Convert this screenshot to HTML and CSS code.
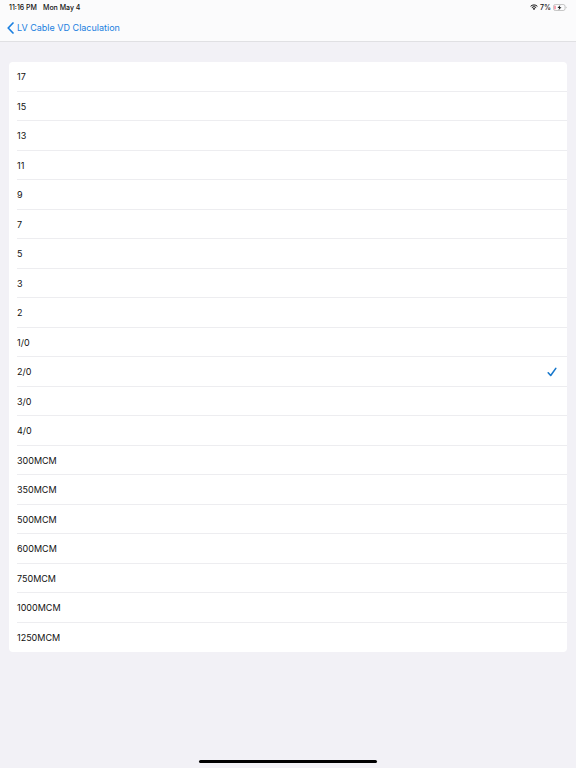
FILE: index.html
```
<!DOCTYPE html>
<html lang="en">
<head>
  <meta charset="UTF-8">
  <meta name="viewport" content="width=device-width, initial-scale=1">
  <title>LV Cable VD Claculation</title>
  <link rel="stylesheet" href="styles.css">
</head>
<body>
  <header class="top">
    <div class="status">
      <span>11:16 PM</span>
      <span class="date">Mon May 4</span>
      <svg class="wifi" viewBox="0 0 16 12" aria-hidden="true">
        <path d="M1.2 4.6a9.8 9.8 0 0 1 13.6 0M3.7 7.2a6.2 6.2 0 0 1 8.6 0" fill="none" stroke="#111" stroke-width="2"/>
        <path d="M8 12L5.4 9.3a3.7 3.7 0 0 1 5.2 0z" fill="#111"/>
      </svg>
      <span>7%</span>
      <svg class="battery" viewBox="0 0 28 14" aria-hidden="true">
        <rect x="1" y="1" width="23" height="12" rx="3.5" fill="none" stroke="#aaa" stroke-width="1.3"/>
        <path d="M3 3.5h2v7H3z" fill="#f0526a"/>
        <path d="M25.6 5v4c2-.6 2-3.4 0-4z" fill="#aaa"/>
        <path d="M14.5 2L9 8h3.500l-1.500 4.500L17 6.500h-3.700z" fill="#111"/>
      </svg>
    </div>
    <nav class="nav">
      <a class="back" href="#">
        <svg class="chevron" viewBox="0 0 7 12" aria-hidden="true">
          <path d="M6 1L1.2 6L6 11" fill="none" stroke="#1a7fe0" stroke-width="1.7" stroke-linecap="round" stroke-linejoin="round"/>
        </svg>
        LV Cable VD Claculation
      </a>
    </nav>
  </header>

  <main>
    <form class="list">
      <label class="row"><input type="radio" name="size"><span>17</span></label>
      <label class="row"><input type="radio" name="size"><span>15</span></label>
      <label class="row"><input type="radio" name="size"><span>13</span></label>
      <label class="row"><input type="radio" name="size"><span>11</span></label>
      <label class="row"><input type="radio" name="size"><span>9</span></label>
      <label class="row"><input type="radio" name="size"><span>7</span></label>
      <label class="row"><input type="radio" name="size"><span>5</span></label>
      <label class="row"><input type="radio" name="size"><span>3</span></label>
      <label class="row"><input type="radio" name="size"><span>2</span></label>
      <label class="row"><input type="radio" name="size"><span>1/0</span></label>
      <label class="row">
        <input type="radio" name="size" checked><span>2/0</span>
        <svg class="check" viewBox="0 0 10 10" aria-hidden="true">
          <path d="M1.2 5.8L3.7 8.5L8.8 1.4" fill="none" stroke="#1878cc" stroke-width="1.6" stroke-linecap="round" stroke-linejoin="round"/>
        </svg>
      </label>
      <label class="row"><input type="radio" name="size"><span>3/0</span></label>
      <label class="row"><input type="radio" name="size"><span>4/0</span></label>
      <label class="row"><input type="radio" name="size"><span>300MCM</span></label>
      <label class="row"><input type="radio" name="size"><span>350MCM</span></label>
      <label class="row"><input type="radio" name="size"><span>500MCM</span></label>
      <label class="row"><input type="radio" name="size"><span>600MCM</span></label>
      <label class="row"><input type="radio" name="size"><span>750MCM</span></label>
      <label class="row"><input type="radio" name="size"><span>1000MCM</span></label>
      <label class="row"><input type="radio" name="size"><span>1250MCM</span></label>
    </form>
  </main>

  <div class="home-bar"></div>
</body>
</html>
```
FILE: styles.css
```
* {
  box-sizing: border-box;
}
body {
  margin: 0;
  min-height: 100vh;
  display: flex;
  flex-direction: column;
  background: #f2f1f6;
  color: #111;
  font-family: Inter, "Liberation Sans", sans-serif;
  font-size: 9px;
}
.top {
  background: #fbfbfc;
  border-bottom: 1px solid #e0e0e3;
}
.status {
  display: flex;
  align-items: center;
  height: 14px;
  padding: 0 9px;
  font-size: 7px;
  font-weight: 500;
}
.date {
  margin-left: 6px;
}
.wifi {
  width: 8px;
  height: 6px;
  margin-left: auto;
  margin-right: 2px;
}
.battery {
  width: 14px;
  height: 7px;
  margin-left: 2px;
}
.nav {
  display: flex;
  align-items: center;
  height: 27px;
  padding: 0 7px;
}
.back {
  display: flex;
  align-items: center;
  gap: 3px;
  color: #1a7fe0;
  text-decoration: none;
}
.chevron {
  width: 7px;
  height: 12px;
}
main {
  flex: 1;
  padding: 20px 9px;
}
.list {
  background: #fff;
  border-radius: 4px;
}
.row {
  display: flex;
  align-items: center;
  height: 30px;
  margin-left: 8px;
  padding-right: 10px;
  border-bottom: 1px solid #ededf0;
}
.row:nth-child(even) {
  height: 29px;
}
.row:last-child {
  border-bottom: none;
}
.row input {
  appearance: none;
  width: 0;
  height: 0;
  margin: 0;
}
.check {
  width: 10px;
  height: 10px;
  margin-left: auto;
}
.home-bar {
  width: 31%;
  height: 3px;
  margin: 0 auto 5px;
  border-radius: 2px;
  background: #000;
}
```
